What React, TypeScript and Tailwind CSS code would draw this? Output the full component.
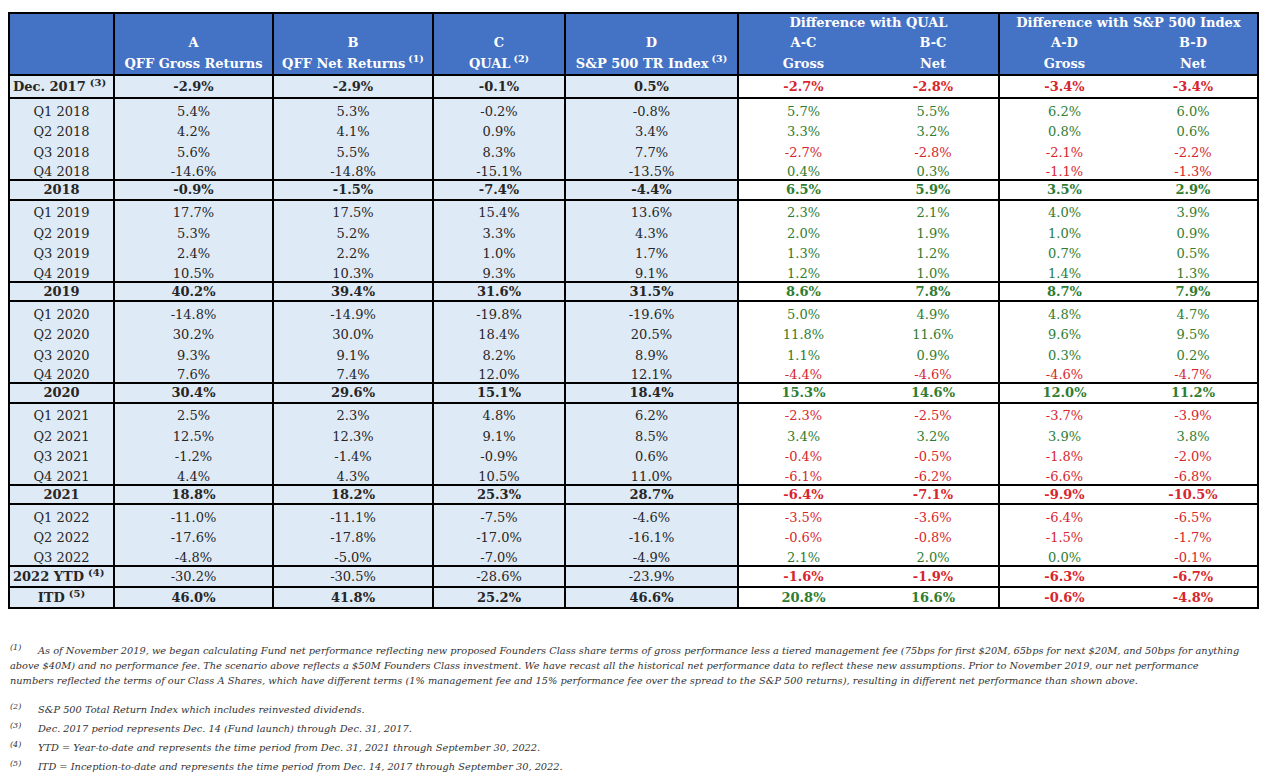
import React from "react";

type Kind = "dec" | "q" | "year" | "ytd" | "itd";
type Row = { label: string; sup?: string; v: string[]; kind: Kind; last?: boolean };

const raw: [string, string | undefined, Kind, string, boolean?][] = [
  ["Dec. 2017", "(3)", "dec", "-2.9,-2.9,-0.1,0.5,-2.7,-2.8,-3.4,-3.4", true],
  ["Q1 2018", undefined, "q", "5.4,5.3,-0.2,-0.8,5.7,5.5,6.2,6.0"],
  ["Q2 2018", undefined, "q", "4.2,4.1,0.9,3.4,3.3,3.2,0.8,0.6"],
  ["Q3 2018", undefined, "q", "5.6,5.5,8.3,7.7,-2.7,-2.8,-2.1,-2.2"],
  ["Q4 2018", undefined, "q", "-14.6,-14.8,-15.1,-13.5,0.4,0.3,-1.1,-1.3", true],
  ["2018", undefined, "year", "-0.9,-1.5,-7.4,-4.4,6.5,5.9,3.5,2.9", true],
  ["Q1 2019", undefined, "q", "17.7,17.5,15.4,13.6,2.3,2.1,4.0,3.9"],
  ["Q2 2019", undefined, "q", "5.3,5.2,3.3,4.3,2.0,1.9,1.0,0.9"],
  ["Q3 2019", undefined, "q", "2.4,2.2,1.0,1.7,1.3,1.2,0.7,0.5"],
  ["Q4 2019", undefined, "q", "10.5,10.3,9.3,9.1,1.2,1.0,1.4,1.3", true],
  ["2019", undefined, "year", "40.2,39.4,31.6,31.5,8.6,7.8,8.7,7.9", true],
  ["Q1 2020", undefined, "q", "-14.8,-14.9,-19.8,-19.6,5.0,4.9,4.8,4.7"],
  ["Q2 2020", undefined, "q", "30.2,30.0,18.4,20.5,11.8,11.6,9.6,9.5"],
  ["Q3 2020", undefined, "q", "9.3,9.1,8.2,8.9,1.1,0.9,0.3,0.2"],
  ["Q4 2020", undefined, "q", "7.6,7.4,12.0,12.1,-4.4,-4.6,-4.6,-4.7", true],
  ["2020", undefined, "year", "30.4,29.6,15.1,18.4,15.3,14.6,12.0,11.2", true],
  ["Q1 2021", undefined, "q", "2.5,2.3,4.8,6.2,-2.3,-2.5,-3.7,-3.9"],
  ["Q2 2021", undefined, "q", "12.5,12.3,9.1,8.5,3.4,3.2,3.9,3.8"],
  ["Q3 2021", undefined, "q", "-1.2,-1.4,-0.9,0.6,-0.4,-0.5,-1.8,-2.0"],
  ["Q4 2021", undefined, "q", "4.4,4.3,10.5,11.0,-6.1,-6.2,-6.6,-6.8", true],
  ["2021", undefined, "year", "18.8,18.2,25.3,28.7,-6.4,-7.1,-9.9,-10.5", true],
  ["Q1 2022", undefined, "q", "-11.0,-11.1,-7.5,-4.6,-3.5,-3.6,-6.4,-6.5"],
  ["Q2 2022", undefined, "q", "-17.6,-17.8,-17.0,-16.1,-0.6,-0.8,-1.5,-1.7"],
  ["Q3 2022", undefined, "q", "-4.8,-5.0,-7.0,-4.9,2.1,2.0,0.0,-0.1", true],
  ["2022 YTD", "(4)", "ytd", "-30.2,-30.5,-28.6,-23.9,-1.6,-1.9,-6.3,-6.7", true],
  ["ITD", "(5)", "itd", "46.0,41.8,25.2,46.6,20.8,16.6,-0.6,-4.8", true],
];

const rows: Row[] = raw.map(([label, sup, kind, v, last]) => ({
  label,
  sup,
  kind,
  v: v.split(",").map((x) => x + "%"),
  last,
}));

const font = { fontFamily: '"DejaVu Serif", "Liberation Serif", serif' };

function Sup({ t }: { t: string }) {
  return <sup className="ml-[3px] text-[9.5px] font-bold align-[1px]">{t}</sup>;
}

function RowSup({ t }: { t: string }) {
  return <sup className="ml-[4px] text-[10px] font-bold align-baseline">{t}</sup>;
}

function FnSup({ t }: { t: string }) {
  return <span className="inline-block w-[28px] text-[8px] align-[4px] leading-none">{t}</span>;
}

export default function App() {
  return (
    <div className="w-[1273px] h-[781px] bg-white pl-[8px] pt-[12px] text-[#262626]" style={font}>
      <table className="table-fixed border-collapse text-[13px] leading-none">
        <colgroup>
          <col className="w-[105px]" />
          <col className="w-[159px]" />
          <col className="w-[160px]" />
          <col className="w-[132px]" />
          <col className="w-[173px]" />
          <col className="w-[130px]" />
          <col className="w-[131px]" />
          <col className="w-[130px]" />
          <col className="w-[129px]" />
        </colgroup>
        <thead>
          <tr className="h-[19px] bg-[#4472c4] text-white font-bold">
            <th rowSpan={2} className="border-2 border-black"></th>
            <th rowSpan={2} className="border-2 border-black align-bottom p-0 font-bold">
              <div className="leading-[21px]">A</div>
              <div className="leading-[21px] whitespace-nowrap">QFF Gross Returns</div>
            </th>
            <th rowSpan={2} className="border-2 border-black align-bottom p-0 font-bold">
              <div className="leading-[21px]">B</div>
              <div className="leading-[21px] whitespace-nowrap">
                QFF Net Returns<Sup t="(1)" />
              </div>
            </th>
            <th rowSpan={2} className="border-2 border-black align-bottom p-0 font-bold">
              <div className="leading-[21px]">C</div>
              <div className="leading-[21px] whitespace-nowrap">
                QUAL<Sup t="(2)" />
              </div>
            </th>
            <th rowSpan={2} className="border-2 border-black align-bottom p-0 font-bold">
              <div className="leading-[21px]">D</div>
              <div className="leading-[21px] whitespace-nowrap">
                S&amp;P 500 TR Index<Sup t="(3)" />
              </div>
            </th>
            <th colSpan={2} className="border-2 border-b-0 border-black align-bottom p-0 font-bold whitespace-nowrap leading-[18px]">
              Difference with QUAL
            </th>
            <th colSpan={2} className="border-2 border-b-0 border-black align-bottom p-0 font-bold whitespace-nowrap leading-[18px]">
              Difference with S&amp;P 500 Index
            </th>
          </tr>
          <tr className="h-[43px] bg-[#4472c4] text-white">
            {[
              ["A-C", "Gross", "border-l-2"],
              ["B-C", "Net", "border-r-2"],
              ["A-D", "Gross", "border-l-2"],
              ["B-D", "Net", "border-r-2"],
            ].map(([a, b, bc], i) => (
              <th key={i} className={`${bc} border-b-2 border-black align-bottom p-0 font-bold`}>
                <div className="leading-[21px]">{a}</div>
                <div className="leading-[21px]">{b}</div>
              </th>
            ))}
          </tr>
        </thead>
        <tbody>
          {rows.map((r, ri) => {
            const isQ = r.kind === "q";
            const bold = !isQ;
            const valBold = !isQ && r.kind !== "ytd";
            const h =
              isQ ? "h-[20.5px]" : r.kind === "year" ? "h-[19.5px]" : r.kind === "dec" ? "h-[23px]" : "h-[21px]";
            const bb = r.last ? "border-b-2 border-b-black" : "";
            const va = isQ ? "align-bottom leading-[12px] pb-[1px]" : "align-middle";
            const leftAlign = r.kind === "dec" || r.kind === "ytd";
            return (
              <tr key={ri} className={h}>
                <td
                  className={`border-x-2 border-x-black ${bb} ${va} bg-[#dfeaf7] px-0 whitespace-nowrap ${
                    leftAlign ? "text-left pl-[3px]" : "text-center"
                  } ${bold ? "font-bold" : ""}`}
                >
                  {r.label}
                  {r.sup && <RowSup t={r.sup} />}
                </td>
                {r.v.map((val, ci) => {
                  const diff = ci >= 4;
                  const neg = val.startsWith("-");
                  const color = diff ? (neg ? "text-[#d7262e]" : "text-[#2e7d32]") : "text-[#262626]";
                  const bg = diff ? "bg-white" : "bg-[#dfeaf7]";
                  const vb =
                    ci < 4 || ci === 5 || ci === 7
                      ? "border-r-2 border-r-black"
                      : "";
                  const wb = diff ? bold : valBold;
                  return (
                    <td
                      key={ci}
                      className={`${bg} ${color} ${vb} ${bb} ${va} px-0 text-center whitespace-nowrap ${
                        wb ? "font-bold" : ""
                      }`}
                    >
                      {val}
                    </td>
                  );
                })}
              </tr>
            );
          })}
        </tbody>
      </table>

      <div className="mt-[34px] pl-[2px] text-[9.8px] italic text-[#333] leading-[15px]">
        <div className="whitespace-nowrap">
          <FnSup t="(1)" />
          As of November 2019, we began calculating Fund net performance reflecting new proposed Founders Class share terms of gross performance less a tiered management fee (75bps for first $20M, 65bps for next $20M, and 50bps for anything
        </div>
        <div className="whitespace-nowrap">
          above $40M) and no performance fee. The scenario above reflects a $50M Founders Class investment. We have recast all the historical net performance data to reflect these new assumptions. Prior to November 2019, our net performance
        </div>
        <div className="whitespace-nowrap">
          numbers reflected the terms of our Class A Shares, which have different terms (1% management fee and 15% performance fee over the spread to the S&amp;P 500 returns), resulting in different net performance than shown above.
        </div>
        <div className="mt-[14px] flex flex-col gap-[4px]">
          <div className="whitespace-nowrap">
            <FnSup t="(2)" />
            S&amp;P 500 Total Return Index which includes reinvested dividends.
          </div>
          <div className="whitespace-nowrap">
            <FnSup t="(3)" />
            Dec. 2017 period represents Dec. 14 (Fund launch) through Dec. 31, 2017.
          </div>
          <div className="whitespace-nowrap">
            <FnSup t="(4)" />
            YTD = Year-to-date and represents the time period from Dec. 31, 2021 through September 30, 2022.
          </div>
          <div className="whitespace-nowrap">
            <FnSup t="(5)" />
            ITD = Inception-to-date and represents the time period from Dec. 14, 2017 through September 30, 2022.
          </div>
        </div>
      </div>
    </div>
  );
}
